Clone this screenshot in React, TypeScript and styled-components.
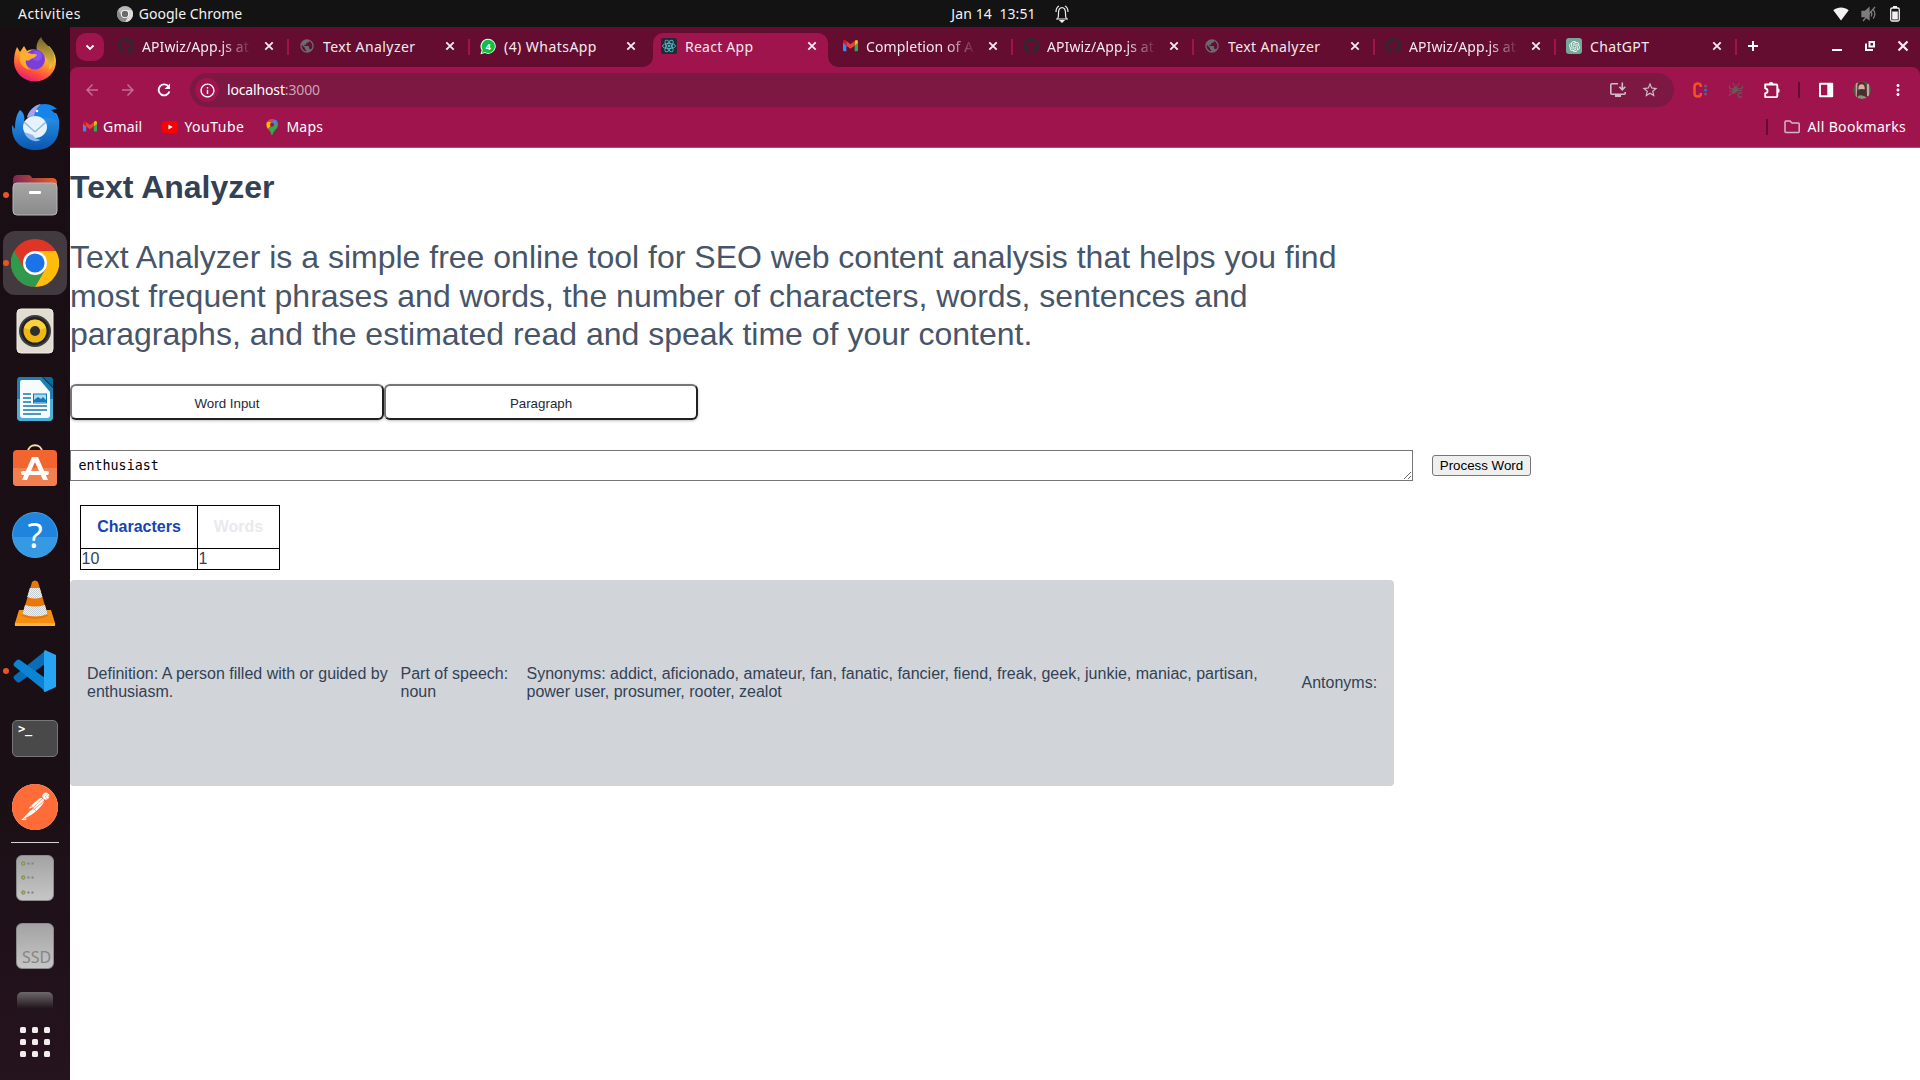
import React from "react";
import styled, { createGlobalStyle, css } from "styled-components";
import {
  MdArrowBack,
  MdArrowForward,
  MdInfoOutline,
  MdMoreVert,
  MdPublic,
  MdStarBorder,
} from "react-icons/md";
import { FaGithub } from "react-icons/fa";
import { SiPostman } from "react-icons/si";
import { RiOpenaiFill } from "react-icons/ri";

const wine = "#9f144d";
const darkWine = "#640d30";
const fieldWine = "#7c1842";

const GlobalStyle = createGlobalStyle`
  * { box-sizing: border-box; }
  html, body { margin: 0; background: #fff; overflow: hidden; }
`;

const Desktop = styled.div`
  width: 1920px;
  height: 1080px;
  display: grid;
  grid-template: 27px 1053px / 70px 1850px;
  font-family: "Noto Sans", "Open Sans", sans-serif;
  overflow: hidden;
`;

const Label = styled.span<{ $ls?: number }>`
  white-space: pre;
  letter-spacing: ${(p) => p.$ls ?? 0}px;
`;

/* ---------- system bar ---------- */

const TopBar = styled.header`
  grid-column: 1 / 3;
  display: grid;
  grid-template-columns: 1fr auto 1fr;
  align-items: center;
  background: #131313;
  color: #f2f2f2;
  font-size: 14px;
  line-height: 26px;
`;

const TopLeft = styled.div`
  display: flex;
  align-items: center;
  padding-left: 18px;
`;

const AppMenu = styled.div`
  display: flex;
  align-items: center;
  gap: 6px;
  margin-left: 36px;
`;

const Clock = styled.div`
  display: flex;
  align-items: center;
  gap: 19px;
  padding-left: 100px;
`;

const Tray = styled.div`
  display: flex;
  justify-content: flex-end;
  align-items: center;
  gap: 12px;
  padding-right: 19px;
`;

/* ---------- dock ---------- */

const Dock = styled.nav`
  display: flex;
  flex-direction: column;
  align-items: center;
  background: linear-gradient(#190e14, #1a0f15 70%, #25131d);
`;

const DockSlot = styled.div<{ $active?: boolean; $running?: boolean; $lift?: number }>`
  position: relative;
  width: 64px;
  height: 64px;
  flex: none;
  margin-bottom: 4px;
  padding-bottom: ${(p) => p.$lift ?? 0}px;
  display: flex;
  align-items: center;
  justify-content: center;
  border-radius: 12px;
  ${(p) => p.$active && css`background: #433a3f;`}
  ${(p) =>
    p.$running &&
    css`
      &::before {
        content: "";
        position: absolute;
        left: 0;
        top: 29px;
        width: 6px;
        height: 6px;
        border-radius: 50%;
        background: #e95420;
      }
    `}
`;

const DockRule = styled.div`
  width: 48px;
  height: 1px;
  margin: -1px 0 3px;
  background: #d6d2d4;
`;

const FadingSlot = styled.div`
  height: 27px;
  width: 36px;
  padding-top: 10px;
  overflow: hidden;
  flex: none;
`;

const FadingDrive = styled.div`
  height: 17px;
  border-radius: 5px 5px 0 0;
  background: linear-gradient(#6d686b, #1f1219);
`;

const AppGrid = styled.div`
  display: grid;
  grid-template-columns: repeat(3, 6px);
  grid-auto-rows: 6px;
  gap: 6px;
  margin-top: 18px;
`;

const GridDot = styled.i`
  background: #f0eeec;
  border-radius: 1.5px;
`;

/* ---------- browser ---------- */

const Browser = styled.main`
  display: flex;
  flex-direction: column;
  background: ${darkWine};
  color: #fff;
  font-size: 14px;
  min-width: 0;
`;

const TabStrip = styled.div`
  height: 40px;
  display: flex;
  background: ${darkWine};
`;

const TabSearch = styled.button`
  width: 28px;
  height: 28px;
  margin: 6px 4px 0 6px;
  padding: 0;
  border: 0;
  border-radius: 10px;
  background: ${wine};
  color: #fff;
  display: flex;
  align-items: center;
  justify-content: center;
`;

const Tab = styled.div<{ $active?: boolean; $rule?: boolean }>`
  position: relative;
  width: 181px;
  height: 40px;
  padding: 0 0 2px 10px;
  display: flex;
  align-items: center;
  flex: none;
  color: #f4e9ee;
  ${(p) =>
    p.$rule &&
    css`
      &::after {
        content: "";
        position: absolute;
        right: 0;
        top: 12px;
        width: 2px;
        height: 16px;
        background: ${wine};
      }
    `}
  ${(p) =>
    p.$active &&
    css`
      &::before {
        content: "";
        position: absolute;
        inset: 6px 4px 0 2px;
        border-radius: 10px 10px 0 0;
        background: ${wine};
      }
    `}
`;

const TabFoot = styled.i<{ $right?: boolean }>`
  position: absolute;
  bottom: 0;
  width: 10px;
  height: 10px;
  ${(p) => (p.$right ? "right: -6px;" : "left: -8px;")}
  background: radial-gradient(
    circle at ${(p) => (p.$right ? "100%" : "0")} 0,
    transparent 9.5px,
    ${wine} 10px
  );
`;

const Favicon = styled.span`
  position: relative;
  width: 16px;
  height: 16px;
  margin-right: 8px;
  flex: none;
  display: flex;
  align-items: center;
  justify-content: center;
`;

const TabTitle = styled.span<{ $fade?: boolean }>`
  position: relative;
  width: 110px;
  padding-top: 2px;
  line-height: 22px;
  overflow: hidden;
  white-space: nowrap;
  ${(p) =>
    p.$fade &&
    css`
      mask-image: linear-gradient(90deg, #000 72%, transparent);
    `}
`;

const TabClose = styled.span`
  position: relative;
  display: flex;
  margin-left: 9px;
`;

const NewTab = styled.span`
  display: flex;
  margin: 11px 0 0 8px;
`;

const WindowButtons = styled.div`
  margin-left: auto;
  display: flex;
  align-items: center;
  gap: 17px;
  height: 38px;
  padding-right: 9px;
`;

const Toolbar = styled.div`
  height: 41px;
  display: flex;
  align-items: center;
  padding: 5px 13px 0;
  background: ${wine};
  border-radius: 8px 8px 0 0;
`;

const NavIcon = styled.span<{ $dim?: boolean }>`
  width: 18px;
  height: 18px;
  margin-right: 18px;
  flex: none;
  display: flex;
  color: ${(p) => (p.$dim ? "#c46d92" : "#fff")};
`;

const Omnibox = styled.div`
  width: 1484px;
  height: 34px;
  flex: none;
  margin-left: -1px;
  padding: 0 15px 0 5px;
  border-radius: 17px;
  display: flex;
  align-items: center;
  background: ${fieldWine};
`;

const SiteInfo = styled.span`
  width: 24px;
  height: 24px;
  margin-right: 8px;
  border-radius: 50%;
  background: ${wine};
  display: flex;
  align-items: center;
  justify-content: center;
`;

const Address = styled.span`
  padding-bottom: 2px;
  white-space: pre;
  letter-spacing: -0.15px;
`;

const Port = styled.span`
  color: #cba3b4;
`;

const OmniActions = styled.div`
  margin-left: auto;
  display: flex;
  gap: 14px;
  color: #d0bcc5;
`;

const Extensions = styled.div`
  display: flex;
  align-items: center;
  margin-left: 17px;
  gap: 18px;
`;

const Cell = styled.span`
  width: 18px;
  height: 20px;
  flex: none;
  display: flex;
  align-items: center;
  justify-content: center;
`;

const ToolRule = styled.i<{ $pull?: boolean }>`
  width: 2px;
  height: 16px;
  margin: 0 ${(p) => (p.$pull ? -1 : 0)}px;
  background: ${darkWine};
`;

const Bookmarks = styled.div`
  height: 40px;
  display: flex;
  align-items: center;
  padding: 0 14px 2px 13px;
  background: ${wine};
  border-bottom: 1px solid #b5466f;
`;

const Bookmark = styled.div<{ $next: number; $gap: number }>`
  display: flex;
  align-items: center;
  gap: ${(p) => p.$gap}px;
  margin-right: ${(p) => p.$next}px;
`;

const AllBookmarks = styled.div`
  margin-left: auto;
  display: flex;
  align-items: center;
`;

const FolderBox = styled.span`
  display: flex;
  margin: 0 8px 0 16px;
  color: #d1b9c3;
`;

/* ---------- page ---------- */

const Page = styled.article`
  flex: 1;
  background: #fff;
  color: #334155;
  font: 16px "Liberation Sans", Arial, sans-serif;
`;

const Title = styled.h1`
  margin: 0;
  padding-top: 20px;
  font-size: 32px;
  line-height: 38.4px;
`;

const Intro = styled.p`
  width: 1324px;
  margin: 32px 0 0;
  color: #475569;
  font-size: 32px;
  line-height: 38.4px;
`;

const ModeRow = styled.div`
  display: flex;
  margin-top: 30px;
`;

const ModeButton = styled.button`
  width: 314px;
  height: 36px;
  padding: 3px 0 0;
  background: #fff;
  border: 2px solid;
  border-color: #767676 #212121 #212121 #767676;
  border-radius: 6px;
  box-shadow: 0 1px 3px rgba(0, 0, 0, 0.25);
  color: #1f2937;
  font: 13.333px "Liberation Sans", Arial, sans-serif;
`;

const EntryRow = styled.div`
  display: flex;
  align-items: center;
  margin-top: 30px;
`;

const WordField = styled.textarea`
  width: 1343px;
  height: 31px;
  margin: 0 19px 0 0;
  padding: 7px 7px 7px 7.5px;
  border: 1px solid #767676;
  overflow: hidden;
  background: #fff;
  color: #000;
  font: 13.333px "DejaVu Sans Mono", monospace;
  line-height: 15px;
`;

const ProcessButton = styled.button`
  width: 99px;
  height: 21px;
  padding: 0;
  border: 1px solid #767676;
  border-radius: 3px;
  background: #efefef;
  color: #000;
  font: 13.333px "Liberation Sans", Arial, sans-serif;
  white-space: nowrap;
`;

const CountTable = styled.table`
  margin: 24px 0 0 10px;
  border-collapse: collapse;
  th, td { border: 1px solid #000; }
  td { padding: 1px 1px 1px 0.5px; line-height: 18px; }
`;

const CountHead = styled.th<{ $color: string; $w: number }>`
  width: ${(p) => p.$w}px;
  height: 43px;
  padding: 0;
  color: ${(p) => p.$color};
`;

const ResultCard = styled.section`
  width: 1324px;
  height: 206px;
  margin-top: 10px;
  padding: 0 16px 0 17px;
  display: grid;
  grid-template-columns: 313.5px 126px 775px 1fr;
  align-items: center;
  background: #d1d5da;
  border-radius: 4px;
  line-height: 18px;
`;

const ResultText = styled.div`
  padding-right: 8px;
  white-space: pre-line;
`;

const LastResult = styled(ResultText)`
  padding-right: 0;
  white-space: nowrap;
`;

/* ---------- drawings ---------- */

const ChromeLogo = ({ size, gray }: { size: number; gray?: boolean }) => {
  const [r, y, g, b] = gray
    ? ["#b9b9b9", "#dcdcdc", "#8a8a8a", "#6a6a6a"]
    : ["#df3527", "#fdbd0a", "#2f9a4c", "#1a73e8"];
  return (
    <svg width={size} height={size} viewBox="0 0 48 48">
      <circle cx="24" cy="24" r="24" fill={r} />
      <path d="M24 12H44.8A24 24 0 0 1 24 48L34.4 30Z" fill={y} />
      <path d="M3.2 12L13.6 30A12 12 0 0 0 34.4 30L24 48A24 24 0 0 1 3.2 12Z" fill={g} />
      <circle cx="24" cy="24" r="12" fill="#fff" />
      <circle cx="24" cy="24" r="9.6" fill={b} />
    </svg>
  );
};

const Bell = () => (
  <svg width="14" height="18" viewBox="0 0 14 18" fill="none" stroke="#eee" strokeWidth="1.2">
    <path d="M1 14h12M2.6 13.6c1-1.4.9-3 .9-5.6C3.500 4.500 5 2.600 7 2.600s3.500 1.900 3.500 5.400c0 2.600-.1 4.200.9 5.600M1 7C1 4 2 2 4 1M13 7c0-3-1-5-3-6" />
    <path d="M5.300 15.500h3.400L7 17.200z" fill="#eee" />
  </svg>
);

const Wifi = () => (
  <svg width="16" height="14" viewBox="0 0 16 14">
    <path d="M.3 3.300C4.800-.4 11.200-.4 15.700 3.300L8 13.500z" fill="#f2f2f2" />
  </svg>
);

const Muted = () => (
  <svg width="16" height="16" viewBox="0 0 16 16" fill="none" stroke="#7d7d7d" strokeWidth="1.300">
    <path d="M1 5.500h3L8 2v11.500L4 10.500H1z" fill="#7d7d7d" />
    <path d="M10 5.500c1 1.500 1 3.500 0 5M12.200 3.500c2 2.700 2 6.300 0 9M2 15L14 1" />
  </svg>
);

const Battery = () => (
  <svg width="12" height="16" viewBox="0 0 12 16">
    <path d="M4 0h4v2H4z" fill="#f2f2f2" />
    <rect x="1.700" y="2" width="8.600" height="13" rx="1.500" fill="none" stroke="#f2f2f2" strokeWidth="1.300" />
    <path d="M3.200 5.500h5.600v8H3.200z" fill="#f2f2f2" />
  </svg>
);

const Firefox = () => (
  <svg width="44" height="46" viewBox="0 0 44 46">
    <defs>
      <linearGradient id="ffBody" x1=".8" y1="0" x2=".3" y2="1">
        <stop offset="0" stopColor="#f5e04a" />
        <stop offset=".45" stopColor="#ff9a2c" />
        <stop offset=".75" stopColor="#ff4a3d" />
        <stop offset="1" stopColor="#e3157f" />
      </linearGradient>
      <linearGradient id="ffTail" x1="0" y1="0" x2="0" y2="1">
        <stop offset="0" stopColor="#6e6330" />
        <stop offset="1" stopColor="#fbc93a" />
      </linearGradient>
    </defs>
    <path d="M4 11l3 5 4-6 3 5c4-2 10-2 14 1l8-6c5 5 7 11 7 15a21 20 0 0 1-42 1C1 20 2 15 4 11z" fill="url(#ffBody)" />
    <path d="M28 1c2 6 9 9 12 15 3 7 0 14-4 18 1-9-3-15-11-18-3-4-1-11 3-15z" fill="url(#ffTail)" />
    <circle cx="22" cy="23.500" r="10" fill="#7a3fd6" />
    <circle cx="24" cy="20" r="5" fill="#9059ff" opacity=".7" />
    <path d="M7 17c5-2 9 0 12 1 3 0 5 0 5 1-1 2-4 3-6 4-2 2-4 2-5 1-1 4 1 8 5 10-9-1-13-9-11-17z" fill="#ffae30" />
  </svg>
);

const Thunderbird = () => (
  <svg width="48" height="48" viewBox="0 0 48 48">
    <defs>
      <linearGradient id="tbBody" x1="0" y1="0" x2="0" y2="1">
        <stop offset="0" stopColor="#2c9cf5" />
        <stop offset="1" stopColor="#0b55ad" />
      </linearGradient>
    </defs>
    <path d="M9 7c4 3 5 7 4 11 6-3 9-2 12-5l20-3c5 7 3 15 2 22-3 9-11 15-22 15C10 47 0 38 1 22l3 4c0-7 1-14 5-19z" fill="url(#tbBody)" />
    <path d="M16 14C19 5 26 1 34 1c5 0 10 3 12 5l-6 1c4 2 6 6 7 12-4-4-10-5-15-4-6 2-10 3-14 3z" fill="#1784e8" />
    <path d="M16 14C19 6 24 2 30 1c-4 3-6 7-7 12z" fill="#a6a0f3" />
    <ellipse cx="24" cy="24" rx="12" ry="11" fill="#e6f3ff" />
    <path d="M13 19l10 9q1 1 2 0l10-9" fill="none" stroke="#8fb5da" strokeWidth="1.400" />
    <path d="M13 29c3 8 11 11 17 8-5-1-7-3-8-5z" fill="#8fb7f2" />
    <circle cx="26" cy="8" r="1.300" fill="#fff" />
  </svg>
);

const Files = () => (
  <svg width="46" height="42" viewBox="0 0 46 42">
    <defs>
      <linearGradient id="fBack"><stop offset="0" stopColor="#7c2852" /><stop offset="1" stopColor="#e8602c" /></linearGradient>
      <linearGradient id="fFront" x1="0" y1="0" x2="0" y2="1"><stop offset="0" stopColor="#a5a5a5" /><stop offset="1" stopColor="#8a8a8a" /></linearGradient>
    </defs>
    <path d="M1 6q0-5 5-5h10q3 0 4 3h20q5 0 5 5v12H1z" fill="url(#fBack)" />
    <rect x="1" y="9" width="44" height="32" rx="4" fill="url(#fFront)" stroke="#b8b8b8" />
    <rect x="17" y="17" width="12" height="3" rx="1" fill="#fff" />
  </svg>
);

const Rhythmbox = () => (
  <svg width="38" height="46" viewBox="0 0 38 46">
    <rect x="1" y="1" width="36" height="44" rx="4" fill="#e1ddd1" stroke="#f1eee6" />
    <circle cx="19" cy="23" r="16" fill="#3d3d42" />
    <circle cx="19" cy="23" r="14" fill="#232327" />
    <circle cx="19" cy="23" r="11.500" fill="#efb711" />
    <path d="M19 23L8 20a11.500 11.500 0 0 1 22 0z" fill="#fbd13d" />
    <circle cx="19" cy="23" r="5" fill="#2e2e30" />
  </svg>
);

const Writer = () => (
  <svg width="38" height="46" viewBox="0 0 38 46">
    <path d="M4 1h22l11 11v29q0 4-4 4H5q-4 0-4-4V5q0-4 3-4z" fill="#1c7fb6" />
    <path d="M1 23h36v18q0 4-4 4H5q-4 0-4-4z" fill="#4bb0dc" />
    <path d="M6 4h18l10 12v23q0 3-3 3H7q-3 0-3-3V6q0-2 2-2z" fill="#f8fbfd" />
    <path d="M27 1h7q3 0 3 3v7z" fill="#0e6ba0" />
    <path d="M7 18h8M7 22h8M7 26h8M7 30h24M7 34h24M7 38h18" stroke="#1578b0" strokeWidth="1.700" />
    <rect x="17.500" y="18" width="13" height="9" fill="#a5dbf5" stroke="#1578b0" />
    <path d="M18 26v-2l4-3 3 2 2-2 3 3v2z" fill="#1578b0" />
  </svg>
);

const Software = () => (
  <svg width="46" height="44" viewBox="0 0 46 44">
    <path d="M16 9C16 0 30 0 30 9" fill="none" stroke="#f4dfae" strokeWidth="1.800" />
    <rect x="1" y="7" width="44" height="36" rx="4" fill="#f26430" />
    <path d="M1 25h44v14q0 4-4 4H5q-4 0-4-4z" fill="#f17f4f" />
    <path d="M10 37l10-23h6l10 23h-5L23 19l-8 18z" fill="#fff" />
    <rect x="9" y="28" width="28" height="4" rx="2" fill="#fff" />
  </svg>
);

const HelpDisc = styled.span`
  width: 46px;
  height: 46px;
  border-radius: 50%;
  background: linear-gradient(#1f84dc 55%, #3599e4 55%);
  border: 1px solid #4ba7e8;
  color: #fff;
  font: 35px/43px "Noto Sans", sans-serif;
  text-align: center;
`;

const Vlc = () => (
  <svg width="42" height="46" viewBox="0 0 42 46">
    <defs>
      <pattern id="checks" width="2" height="2" patternUnits="userSpaceOnUse">
        <path d="M0 0h2v2H0z" fill="#eef2f5" />
        <path d="M0 0h1v1H0zM1 1h1v1H1z" fill="#c6ccd1" />
      </pattern>
    </defs>
    <path d="M5 30h32l4 13q1 3-2 3H3q-3 0-2-3z" fill="#f58f13" />
    <path d="M1 43h40v3H1z" fill="#ffb437" />
    <path d="M18 2q3-3 6 0l10 34q-13 6-26 0z" fill="#e87808" />
    <path d="M15.800 8h10l2.600 9q-7 3-15.200 0zM11 25q10 3 20 0l2.500 9q-12 5-25 0z" fill="url(#checks)" />
  </svg>
);

const VsCode = () => (
  <svg width="44" height="44" viewBox="0 0 44 44">
    <path d="M32 2v13L7 33q-2 1-3 0l-3-3q-1-2 0-3z" fill="#0a6cb5" />
    <path d="M32 42V29L7 11q-2-1-3 0l-3 3q-1 2 0 3z" fill="#0b84d4" />
    <path d="M32 1l11 5v32l-11 5q-2 0-1-3V4q0-3 1-3z" fill="#27a4f2" />
  </svg>
);

const TerminalBox = styled.span`
  width: 46px;
  height: 37px;
  border: 1px solid #777;
  border-radius: 5px;
  background: #494949;
  color: #fff;
  font: bold 12px/16px "DejaVu Sans Mono", monospace;
  padding-left: 5px;
  letter-spacing: -0.3px;
`;

const DriveBox = styled.span`
  width: 38px;
  height: 46px;
  border-radius: 6px;
  border: 1px solid #8a8a8a;
  background: linear-gradient(#a3a3a3, #c6c6c6);
  display: flex;
  flex-direction: column;
  justify-content: space-around;
  padding: 0 4px;
`;

const SsdBox = styled(DriveBox)`
  justify-content: flex-end;
  padding-left: 5px;
  color: #858585;
  font: 16px/22px "Noto Sans", sans-serif;
`;

const PostmanDisc = styled.span`
  width: 46px;
  height: 46px;
  display: flex;
  border-radius: 50%;
  background: #fff;
  color: #ff6c37;
`;

const Lamp = () => (
  <svg width="14" height="5" viewBox="0 0 14 5">
    <circle cx="2.300" cy="2.500" r="1.700" fill="#9bc23c" stroke="#6f7a5a" strokeWidth=".8" />
    <path d="M6.500 1.500h2v2h-2zM10.500 1.500h2v2h-2z" fill="#808080" />
  </svg>
);

const GmailLogo = ({ w }: { w: number }) => (
  <svg width={w} height={(w * 12) / 16} viewBox="0 0 16 12">
    <path d="M0 2v9q0 1 1 1h2.600V5.500z" fill="#4285f4" />
    <path d="M16 2v9q0 1-1 1h-2.600V5.500z" fill="#34a853" />
    <path d="M12.400 1l1-.7Q16-.6 16 2v1l-3.600 3z" fill="#fbbc04" />
    <path d="M3.600 1l-1-.7Q0-.6 0 2v1l3.600 3z" fill="#c5221f" />
    <path d="M3.600 1L8 4.500 12.400 1v5L8 9.300 3.600 6z" fill="#ea4335" />
  </svg>
);

const YouTubeLogo = () => (
  <svg width="16" height="12" viewBox="0 0 16 12">
    <rect width="16" height="12" rx="3" fill="#f00" />
    <path d="M6.400 3.500v5L10.600 6z" fill="#fff" />
  </svg>
);

const MapsLogo = () => (
  <svg width="12" height="16" viewBox="0 0 12 16">
    <path d="M6 0a5.800 5.800 0 0 0-5 3l3 3 4-5.700z" fill="#ea4335" />
    <path d="M8 .3L4 6l3.500 1 4-4A6 6 0 0 0 8 .3z" fill="#4285f4" />
    <path d="M1 3C-.2 5.500.5 8 2 10l5-5-3-2z" fill="#fbbc04" />
    <path d="M11.500 3L2 10c2 2.500 3 3 3.500 6h1C7 12 12 9.500 12 6q0-2-.5-3z" fill="#34a853" />
    <circle cx="6" cy="5.700" r="2" fill={wine} />
  </svg>
);

const WhatsAppLogo = () => (
  <svg width="17" height="17" viewBox="0 0 17 17">
    <path d="M8.800.3a8 8 0 1 1-3.600 15.200L.5 16.700l1.200-4.300A8 8 0 0 1 8.800.3z" fill="#e8ffe8" />
    <path d="M8.800 1.300a7 7 0 1 1-3.500 13.100l-3.300.9.900-3.200A7 7 0 0 1 8.800 1.300z" fill="#0bc143" />
    <text x="8.700" y="12" fill="#fff" fontSize="10" fontWeight="700" textAnchor="middle" fontFamily="Noto Sans, sans-serif">4</text>
  </svg>
);

const ReactLogo = () => (
  <svg width="16" height="16" viewBox="0 0 16 16" fill="none" stroke="#53b5cc" strokeWidth=".9">
    <rect width="16" height="16" rx="2" fill="#222c30" stroke="none" />
    {[0, 60, 120].map((a) => (
      <ellipse key={a} cx="8" cy="8" rx="6.500" ry="2.600" transform={`rotate(${a} 8 8)`} />
    ))}
    <circle cx="8" cy="8" r="1" fill="#53b5cc" />
  </svg>
);

const GptTile = styled.span`
  width: 16px;
  height: 16px;
  border-radius: 3px;
  background: #74a89b;
  display: flex;
  align-items: center;
  justify-content: center;
`;

const SidePanel = () => (
  <svg width="16" height="16" viewBox="0 0 16 16">
    <path d="M2 .8h12.200q1 0 1 1v12.400q0 1-1 1H2q-1 0-1-1V1.800q0-1 1-1zM3 2.800v10.400h6.300V2.800z" fill="#fff" fillRule="evenodd" />
  </svg>
);

const Bug = () => (
  <svg width="16" height="16" viewBox="0 0 16 16" fill="none" stroke="#6f5555" strokeWidth="1.100">
    <path d="M8.500 4.500C5 4.500 4.500 8 5 11.500 9 10.500 11 8.500 8.500 4.500z" fill="#6f5555" />
    <path d="M4.500 1l2.500 3M11.500 1L9 4M1.500 3.500v2.500l4 1.500M14.500 3.500v2.500L10 7M1 9.500l4-.5M1.500 14.500v-2l4-2M10 8.500l4 0" />
    <path d="M14 11.500c-1.500-1.300-4-.8-4 1.500s2.500 2.800 4 1.500" strokeWidth="1.400" />
  </svg>
);

const CIcon = () => (
  <svg width="16" height="16" viewBox="0 0 16 16">
    <path d="M8.800 5V4Q8.500 1.500 5.700 1.500T2.500 4.500v7q0 3 3.200 3T8.800 12v-1" fill="none" stroke="#f4511e" strokeWidth="2.600" />
    <circle cx="13.500" cy="4" r="1.500" fill="#67606a" />
    <circle cx="13.500" cy="8" r="1.600" fill="#1a73e8" />
    <circle cx="13.500" cy="12" r="1.500" fill="#67606a" />
  </svg>
);

const Puzzle = () => (
  <svg width="18" height="18" viewBox="0 0 18 18">
    <path
      d="M2.200 3.500H13.300Q14.300 3.500 14.300 4.500V15.100Q14.300 16.100 13.300 16.100H2.200V12.300C5.300 12 5.300 7.800 2.200 7.300Z"
      fill="none"
      stroke="#fff"
      strokeWidth="1.900"
      strokeLinejoin="round"
    />
    <path d="M5.700 3.500a2.400 2.400 0 0 1 4.800 0zM14.300 7.300a2.400 2.400 0 0 1 0 4.800z" fill="#fff" />
  </svg>
);

const InstallGlyph = () => (
  <svg width="18" height="18" viewBox="0 0 18 18" fill="none" stroke="currentColor" strokeWidth="1.600">
    <path d="M9 2.800H2.800q-1 0-1 1v8.400q0 1 1 1h12.400q1 0 1-1V11" />
    <path d="M13.300 1.500v7M10.300 5.800l3 3 3-3" />
    <path d="M6 13h6v3H6z" fill="currentColor" stroke="none" />
  </svg>
);

const FolderGlyph = () => (
  <svg width="16" height="14" viewBox="0 0 16 14" fill="none" stroke="currentColor" strokeWidth="1.500">
    <path d="M1 2q0-1 1-1h4l2 2h6.200q1 0 1 1v7.500q0 1-1 1H2q-1 0-1-1z" />
  </svg>
);

const ReloadGlyph = () => (
  <svg width="18" height="18" viewBox="0 0 18 18">
    <path d="M13.700 5.800A5.500 5.500 0 1 0 14.400 10.500" fill="none" stroke="#fff" strokeWidth="1.900" />
    <path d="M15 2.500V8H9.500z" fill="#fff" />
  </svg>
);

const ChevronGlyph = () => (
  <svg width="16" height="16" viewBox="0 0 16 16">
    <path d="M4.500 6.500L8 10l3.500-3.500" fill="none" stroke="#fff" strokeWidth="1.900" />
  </svg>
);

const CrossGlyph = ({ reach, weight }: { reach: number; weight: number }) => (
  <svg width="16" height="16" viewBox="-8 -8 16 16">
    <path
      d={`M${-reach} ${-reach}L${reach} ${reach}M${reach} ${-reach}L${-reach} ${reach}`}
      stroke="#f6eef2"
      strokeWidth={weight}
    />
  </svg>
);

const Avatar = () => (
  <svg width="20" height="20" viewBox="0 0 20 20">
    <clipPath id="face"><circle cx="10" cy="10" r="10" /></clipPath>
    <g clipPath="url(#face)">
      <path d="M0 0h20v20H0z" fill="#4a5a3c" />
      <path d="M3 2h3v16H3zM15.500 3h2.500v14h-2.500z" fill="#c5a5a5" />
      <path d="M5 3q5-5 9 1l2 16H4z" fill="#62252f" />
      <ellipse cx="9.500" cy="8" rx="3.500" ry="4.500" fill="#d9b3a0" />
      <path d="M6 9.500q4-1 7.500 0l-1 5q-3 2-6 0z" fill="#393532" />
      <path d="M4 20q1-5 6-4t6 4z" fill="#8d8c7d" />
    </g>
  </svg>
);

const PlusGlyph = () => (
  <svg width="16" height="16" viewBox="0 0 16 16"><path d="M8 3v10M3 8h10" stroke="#fff" strokeWidth="2" /></svg>
);

const MinimizeGlyph = () => (
  <svg width="16" height="16" viewBox="0 0 16 16"><path d="M3 12h10" stroke="#fff" strokeWidth="2" /></svg>
);

const RestoreGlyph = () => (
  <svg width="16" height="16" viewBox="0 0 16 16" fill="none" stroke="#fff" strokeWidth="2">
    <path d="M7.500 4h4.500v4.500h-4.500zM4 5.500v6.500h7" />
  </svg>
);

/* ---------- content ---------- */

const github = <FaGithub size={16} color="#2a2a32" />;
const globe = <MdPublic size={18} color="#6b6a70" />;

const tabs = [
  { icon: github, title: "APIwiz/App.js at", fade: true, ls: 0.1 },
  { icon: globe, title: "Text Analyzer", ls: 0.42 },
  { icon: <WhatsAppLogo />, title: "(4) WhatsApp", ls: 0.45, bare: true },
  { icon: <ReactLogo />, title: "React App", ls: 0.25, active: true },
  { icon: <GmailLogo w={15} />, title: "Completion of A", fade: true, ls: 0.1 },
  { icon: github, title: "APIwiz/App.js at", fade: true, ls: 0.1 },
  { icon: globe, title: "Text Analyzer", ls: 0.42 },
  { icon: github, title: "APIwiz/App.js at", fade: true, ls: 0.1 },
  {
    icon: <GptTile><RiOpenaiFill size={13} color="#fff" /></GptTile>,
    title: "ChatGPT",
    ls: 0.35,
  },
];

const dockApps = [
  { icon: <Firefox /> },
  { icon: <Thunderbird /> },
  { icon: <Files />, running: true },
  { icon: <ChromeLogo size={48} />, running: true, active: true },
  { icon: <Rhythmbox /> },
  { icon: <Writer /> },
  { icon: <Software />, lift: 5 },
  { icon: <HelpDisc>?</HelpDisc> },
  { icon: <Vlc /> },
  { icon: <VsCode />, running: true },
  { icon: <TerminalBox>&gt;_</TerminalBox>, lift: 1 },
  { icon: <PostmanDisc><SiPostman size={46} /></PostmanDisc> },
];

export default function App() {
  return (
    <Desktop>
      <GlobalStyle />
      <TopBar>
        <TopLeft>
          <Label $ls={0.45}>Activities</Label>
          <AppMenu>
            <ChromeLogo size={16} gray />
            <Label>Google Chrome</Label>
          </AppMenu>
        </TopLeft>
        <Clock>
          <Label $ls={0.1}>Jan 14  13:51</Label>
          <Bell />
        </Clock>
        <Tray>
          <Wifi />
          <Muted />
          <Battery />
        </Tray>
      </TopBar>

      <Dock>
        {dockApps.map((a, i) => (
          <DockSlot key={i} $active={a.active} $running={a.running} $lift={a.lift}>
            {a.icon}
          </DockSlot>
        ))}
        <DockRule />
        <DockSlot>
          <DriveBox><Lamp /><Lamp /><Lamp /></DriveBox>
        </DockSlot>
        <DockSlot>
          <SsdBox>SSD</SsdBox>
        </DockSlot>
        <FadingSlot><FadingDrive /></FadingSlot>
        <AppGrid>
          {Array.from({ length: 9 }, (_, i) => <GridDot key={i} />)}
        </AppGrid>
      </Dock>

      <Browser>
        <TabStrip>
          <TabSearch><ChevronGlyph /></TabSearch>
          {tabs.map((t, i) => (
            <Tab key={i} $active={t.active} $rule={!t.active && !t.bare && i !== 1 || i === 1}>
              {t.active && <><TabFoot /><TabFoot $right /></>}
              <Favicon>{t.icon}</Favicon>
              <TabTitle $fade={t.fade}><Label $ls={t.ls}>{t.title}</Label></TabTitle>
              <TabClose><CrossGlyph reach={3.7} weight={1.8} /></TabClose>
            </Tab>
          ))}
          <NewTab><PlusGlyph /></NewTab>
          <WindowButtons>
            <MinimizeGlyph />
            <RestoreGlyph />
            <CrossGlyph reach={4.5} weight={2.2} />
          </WindowButtons>
        </TabStrip>
        <Toolbar>
          <NavIcon $dim><MdArrowBack size={18} /></NavIcon>
          <NavIcon $dim><MdArrowForward size={18} /></NavIcon>
          <NavIcon><ReloadGlyph /></NavIcon>
          <Omnibox>
            <SiteInfo><MdInfoOutline size={17} /></SiteInfo>
            <Address>localhost<Port>:3000</Port></Address>
            <OmniActions>
              <InstallGlyph />
              <MdStarBorder size={18} />
            </OmniActions>
          </Omnibox>
          <Extensions>
            <Cell><CIcon /></Cell>
            <Cell><Bug /></Cell>
            <Cell><Puzzle /></Cell>
            <ToolRule $pull />
            <Cell><SidePanel /></Cell>
            <Cell><Avatar /></Cell>
            <Cell><MdMoreVert size={20} /></Cell>
          </Extensions>
        </Toolbar>
        <Bookmarks>
          <Bookmark $gap={6} $next={20}><GmailLogo w={14} /><Label $ls={0.2}>Gmail</Label></Bookmark>
          <Bookmark $gap={6} $next={22}><YouTubeLogo /><Label $ls={0.5}>YouTube</Label></Bookmark>
          <Bookmark $gap={8} $next={0}><MapsLogo /><Label $ls={0.2}>Maps</Label></Bookmark>
          <AllBookmarks>
            <ToolRule />
            <FolderBox><FolderGlyph /></FolderBox>
            <Label $ls={0.32}>All Bookmarks</Label>
          </AllBookmarks>
        </Bookmarks>

        <Page>
          <Title>Text Analyzer</Title>
          <Intro>
            Text Analyzer is a simple free online tool for SEO web content analysis that helps you
            find most frequent phrases and words, the number of characters, words, sentences and
            paragraphs, and the estimated read and speak time of your content.
          </Intro>
          <ModeRow>
            <ModeButton>Word Input</ModeButton>
            <ModeButton>Paragraph</ModeButton>
          </ModeRow>
          <EntryRow>
            <WordField defaultValue="enthusiast" spellCheck={false} />
            <ProcessButton>Process Word</ProcessButton>
          </EntryRow>
          <CountTable>
            <thead>
              <tr>
                <CountHead $color="#1644b4" $w={117}>Characters</CountHead>
                <CountHead $color="#e8eaee" $w={82}>Words</CountHead>
              </tr>
            </thead>
            <tbody>
              <tr><td>10</td><td>1</td></tr>
            </tbody>
          </CountTable>
          <ResultCard>
            <ResultText>Definition: A person filled with or guided by enthusiasm.</ResultText>
            <ResultText>Part of speech: noun</ResultText>
            <ResultText>
              Synonyms: addict, aficionado, amateur, fan, fanatic, fancier, fiend, freak, geek, junkie, maniac, partisan, power user, prosumer, rooter, zealot
            </ResultText>
            <LastResult>Antonyms:</LastResult>
          </ResultCard>
        </Page>
      </Browser>
    </Desktop>
  );
}
